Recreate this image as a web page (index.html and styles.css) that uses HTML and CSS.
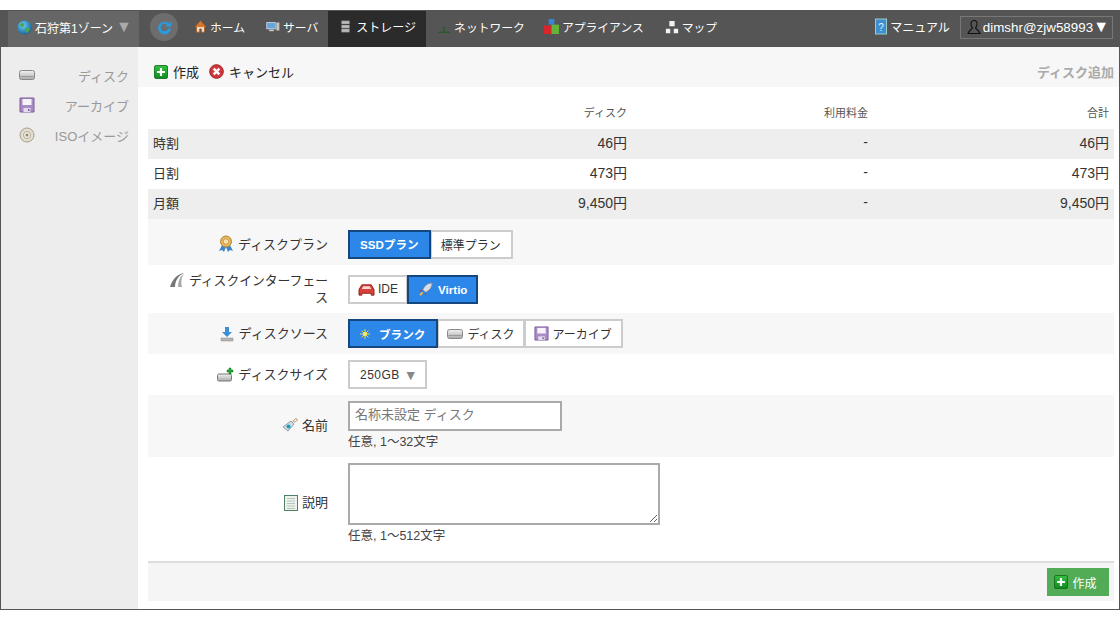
FILE: index.html
```html
<!DOCTYPE html>
<html lang="ja">
<head>
    <meta charset="UTF-8">
    <title>ディスク追加</title>
    <link rel="stylesheet" href="styles.css">
</head>
<body>
    <svg class="defs" width="0" height="0">
        <defs>
            <linearGradient id="hdd" x1="0" y1="0" x2="0" y2="1"><stop offset="0" stop-color="#f2f2f2"/><stop offset="1" stop-color="#aaa"/></linearGradient>
            <linearGradient id="plus" x1="0" y1="0" x2="0" y2="1"><stop offset="0" stop-color="#35c043"/><stop offset="1" stop-color="#0f8a1e"/></linearGradient>
            <radialGradient id="globe" cx="0.4" cy="0.35" r="0.7"><stop offset="0" stop-color="#6fd0f5"/><stop offset="1" stop-color="#0d5f9c"/></radialGradient>
            <symbol id="i-disk" viewBox="0 0 16 16">
                <rect x="0.500" y="3.500" width="15" height="9" rx="2" fill="url(#hdd)" stroke="#888"/>
                <path d="M1.500 9.500h13" stroke="#999"/>
            </symbol>
            <symbol id="i-archive" viewBox="0 0 16 16">
                <path d="M1 1h14v14H1z" fill="#a98cc6" stroke="#7a5c9a"/>
                <path d="M3.500 2h9v6h-9z" fill="#f6f3f9"/>
                <path d="M4.500 11h7v4h-7z" fill="#e4dcec"/>
                <path d="M9 12h1.500v2H9z" fill="#7a5c9a"/>
            </symbol>
            <symbol id="i-iso" viewBox="0 0 16 16">
                <circle cx="8" cy="8" r="7" fill="#e2ddd0" stroke="#a89f8a"/>
                <circle cx="8" cy="8" r="3.500" fill="#f6f2e8" stroke="#b0a890"/>
                <circle cx="8" cy="8" r="1.500" fill="#8d8672"/>
            </symbol>
            <symbol id="i-plus" viewBox="0 0 16 16">
                <rect x="0.500" y="0.500" width="15" height="15" rx="2" fill="url(#plus)" stroke="#0b6a16"/>
                <path d="M8 3.500v9M3.500 8h9" stroke="#fff" stroke-width="2.500"/>
            </symbol>
            <symbol id="i-cross" viewBox="0 0 16 16">
                <circle cx="8" cy="8" r="7.300" fill="#d1363a" stroke="#9a1f22"/>
                <path d="M5 5l6 6M11 5l-6 6" stroke="#fff" stroke-width="2.800"/>
            </symbol>
        </defs>
    </svg>

    <div class="app">
        <header class="topbar">
            <div class="zone">
                <svg class="icon" width="15" height="15" viewBox="0 0 16 16"><circle cx="8" cy="8" r="7.500" fill="url(#globe)"/><path d="M3 5l3-2 2 2-2 3-2-1zM9 9l4-1 1 2-3 4-2-2z" fill="#4fa34a"/></svg>
                <span>石狩第1ゾーン</span>
                <span class="arrow">▼</span>
            </div>
            <div class="refresh">
                <svg width="17" height="17" viewBox="0 0 16 16"><path d="M12.500 4.500A6 6 0 1 0 14 9h-2.600a3.500 3.500 0 1 1-1-3.600L8.500 7H14.500V1.500z" fill="#2a9be0"/></svg>
            </div>
            <nav class="nav">
                <a class="nav-item" href="#">
                    <svg width="13" height="13" viewBox="0 0 16 16"><path d="M3 8v7h4v-4h2v4h4V8z" fill="#f0dcc0" stroke="#a4561e"/><path d="M8 1L1 8.500h14z" fill="#d9742a"/></svg>
                    ホーム
                </a>
                <a class="nav-item" href="#">
                    <svg width="14" height="13" viewBox="0 0 18 16"><rect x="1" y="3" width="11" height="8" fill="#5fa7dc" stroke="#dde"/><path d="M4 13h6" stroke="#ccc" stroke-width="2"/><rect x="13" y="3" width="4" height="10" fill="#ccc" stroke="#888"/></svg>
                    サーバ
                </a>
                <a class="nav-item active" href="#">
                    <svg width="11" height="13" viewBox="0 0 12 16"><path d="M1 1h10v4H1zM1 6h10v4H1zM1 11h10v4H1z" fill="#bbb" stroke="#666" stroke-width="0.500"/></svg>
                    ストレージ
                </a>
                <a class="nav-item" href="#">
                    <svg width="14" height="14" viewBox="0 0 16 16"><path d="M8 7v7M1 14h14" stroke="#1b5c22" stroke-width="1.300"/></svg>
                    ネットワーク
                </a>
                <a class="nav-item app-link" href="#">
                    <svg width="15" height="15" viewBox="0 0 16 16"><rect x="5" y="0" width="6" height="6" fill="#3a83d6"/><rect x="0" y="7" width="8" height="9" fill="#d8262a"/><rect x="8" y="6" width="8" height="10" fill="#65b33a"/></svg>
                    アプライアンス
                </a>
                <a class="nav-item" href="#">
                    <svg width="14" height="14" viewBox="0 0 16 16"><path d="M5 1h6v6H5zM1 10h5v5H1zM10 10h5v5h-5z" fill="#f2f2f2"/></svg>
                    マップ
                </a>
            </nav>
            <a class="manual" href="#">
                <svg width="12" height="17" viewBox="0 0 12 16"><rect x="0.500" y="0.500" width="11" height="15" fill="#3f8fd0" stroke="#9cc"/><text x="6" y="12" font-size="10" text-anchor="middle" fill="#e8f4ff">?</text></svg>
                マニュアル
            </a>
            <div class="user">
                <svg width="16" height="16" viewBox="0 0 16 16"><path d="M8 1.500c2 0 3 1.500 3 3.500s-1 3.500-1.500 4c0 1 3.500 2 4.500 5.500H2C3 11 6.500 10 6.500 9 6 8.500 5 7 5 5s1-3.500 3-3.500z" fill="none" stroke="#111" stroke-width="1.100"/></svg>
                <span>dimshr@zjw58993</span>
                <span class="arrow light">▼</span>
            </div>
        </header>

        <div class="layout">
            <aside class="sidebar">
                <a class="side-item" href="#"><svg width="16" height="16"><use href="#i-disk"/></svg><span>ディスク</span></a>
                <a class="side-item" href="#"><svg width="16" height="16"><use href="#i-archive"/></svg><span>アーカイブ</span></a>
                <a class="side-item" href="#"><svg width="16" height="16"><use href="#i-iso"/></svg><span>ISOイメージ</span></a>
            </aside>

            <main class="main">
                <div class="toolbar">
                    <a class="tool" href="#"><svg width="14" height="14"><use href="#i-plus"/></svg>作成</a>
                    <a class="tool" href="#"><svg width="15" height="15"><use href="#i-cross"/></svg>キャンセル</a>
                    <div class="page-title">ディスク追加</div>
                </div>

                <div class="content">
                    <table class="price">
                        <thead>
                            <tr><th></th><th>ディスク</th><th>利用料金</th><th>合計</th></tr>
                        </thead>
                        <tbody>
                            <tr><td>時割</td><td>46円</td><td>-</td><td>46円</td></tr>
                            <tr><td>日割</td><td>473円</td><td>-</td><td>473円</td></tr>
                            <tr><td>月額</td><td>9,450円</td><td>-</td><td>9,450円</td></tr>
                        </tbody>
                    </table>

                    <div class="row row-plan shaded">
                        <label class="row-label">
                            <svg width="16" height="18" viewBox="0 0 16 18"><path d="M4 10l-3 6 3-1 2 2 2-5 2 5 2-2 3 1-3-6z" fill="#3d86c9"/><circle cx="8" cy="6.500" r="5.500" fill="#e8b860" stroke="#b5832a"/><circle cx="8" cy="6.500" r="2.800" fill="#f7e2ae" stroke="#c79a45"/></svg>
                            ディスクプラン
                        </label>
                        <div class="btn-group">
                            <a class="opt on" href="#">SSDプラン</a>
                            <a class="opt" href="#">標準プラン</a>
                        </div>
                    </div>

                    <div class="row row-iface">
                        <label class="row-label">
                            <span class="label-text"><svg width="16" height="16" viewBox="0 0 16 16"><path d="M15 1C8 2 3 8 1 15h5C6 9 9 4 15 1z" fill="#777"/><path d="M15 2C11 4 9 9 9 15h4c-1-5-1-9 2-13z" fill="#aaa"/></svg> ディスクインターフェース</span>
                        </label>
                        <div class="btn-group">
                            <a class="opt" href="#">
                                <svg width="17" height="15" viewBox="0 0 18 16"><path d="M4 3h10l3 5v6h-3v-2H4v2H1V8z" fill="#d9403a" stroke="#8f1f1c"/><path d="M5.500 4.500h7l1.500 3H4z" fill="#f4d9d2"/></svg>
                                IDE
                            </a>
                            <a class="opt on" href="#">
                                <svg width="17" height="15" viewBox="0 0 18 16"><path d="M15 1c-5 0-8 3-10 7l3 3c4-2 7-5 7-10z" fill="#d8dde6" stroke="#7a8798"/><path d="M5 8l-3 1 1 2zM8 11l-1 3 2-1z" fill="#c23a3a"/><path d="M5 11l-3 3" stroke="#f0c040" stroke-width="2"/></svg>
                                Virtio
                            </a>
                        </div>
                    </div>

                    <div class="row row-source shaded">
                        <label class="row-label">
                            <svg width="16" height="16" viewBox="0 0 16 16"><path d="M6 1h4v5h3l-5 5-5-5h3z" fill="#3a8fd6"/><path d="M2 12h12v3H2z" fill="#b5b5b5" stroke="#888" stroke-width="0.500"/></svg>
                            ディスクソース
                        </label>
                        <div class="btn-group">
                            <a class="opt on wide" href="#">
                                <svg width="12" height="12" viewBox="0 0 12 12"><path d="M6 1v10M1 6h10M2.500 2.500l7 7M9.500 2.500l-7 7" stroke="#f0d84a"/><circle cx="6" cy="6" r="2" fill="#f7e96a"/></svg>
                                ブランク
                            </a>
                            <a class="opt" href="#"><svg width="16" height="16"><use href="#i-disk"/></svg>ディスク</a>
                            <a class="opt" href="#"><svg width="15" height="15"><use href="#i-archive"/></svg>アーカイブ</a>
                        </div>
                    </div>

                    <div class="row row-size">
                        <label class="row-label">
                            <svg width="17" height="16" viewBox="0 0 17 16"><rect x="0.500" y="7" width="14" height="7" rx="1.500" fill="url(#hdd)" stroke="#777"/><path d="M12 1h2v2h2v2h-2v2h-2V5h-2V3h2z" fill="#27a637" stroke="#11701c" stroke-width="0.500"/></svg>
                            ディスクサイズ
                        </label>
                        <div class="select">250GB <span class="arrow grey">▼</span></div>
                    </div>

                    <div class="row row-name shaded">
                        <label class="row-label">
                            <svg width="16" height="16" viewBox="0 0 16 16"><path d="M9 4l3 3-6 7-5-4z" fill="#d3dbe2" stroke="#8ea0ae"/><circle cx="6.500" cy="9.500" r="2" fill="#18a0b8"/><path d="M11 5c1-3 3-4 4-3s-1 3-3 3" fill="none" stroke="#b98d5a"/></svg>
                            名前
                        </label>
                        <div class="field">
                            <input class="text-input" type="text" placeholder="名称未設定 ディスク">
                            <div class="hint">任意, 1〜32文字</div>
                        </div>
                    </div>

                    <div class="row row-desc">
                        <label class="row-label">
                            <svg width="14" height="16" viewBox="0 0 14 16"><rect x="0.500" y="0.500" width="13" height="15" fill="#eef3ea" stroke="#4f7f68"/><path d="M3 3.500h8M3 6h8M3 8.500h8M3 11h8M3 13.500h8" stroke="#b6c4c4"/></svg>
                            説明
                        </label>
                        <div class="field">
                            <textarea class="text-area"></textarea>
                            <div class="hint">任意, 1〜512文字</div>
                        </div>
                    </div>

                    <div class="footer">
                        <a class="submit" href="#"><svg width="14" height="14"><use href="#i-plus"/></svg>作成</a>
                    </div>
                </div>
            </main>
        </div>
    </div>
</body>
</html>
```

FILE: styles.css
```css
* {
    box-sizing: border-box;
}

html, body {
    margin: 0;
    padding: 0;
    height: 100%;
    overflow: hidden;
    background: #fff;
}

body {
    padding-top: 10px;
    font-family: "Liberation Sans", "Noto Sans CJK JP", sans-serif;
    font-size: 13px;
    color: #333;
}

a {
    color: inherit;
    text-decoration: none;
}

.defs {
    position: absolute;
}

.app {
    height: 600px;
    border-bottom: 1px solid #555;
    display: flex;
    flex-direction: column;
}

.topbar {
    height: 37px;
    flex: none;
    display: flex;
    align-items: center;
    background: #555;
    color: #fff;
    padding-left: 8px;
}

.zone {
    width: 131px;
    height: 36px;
    flex: none;
    display: flex;
    align-items: center;
    gap: 3px;
    padding: 0 0 3px 9px;
    background: #666;
    font-size: 12px;
    white-space: nowrap;
}

.arrow {
    font-size: 16px;
    line-height: 1;
    color: #aaa;
    margin-left: 0;
}

.arrow.light {
    color: #fff;
    margin-left: -1px;
}

.arrow.grey {
    color: #888;
    font-size: 14px;
    margin-left: 4px;
}

.refresh {
    width: 28px;
    height: 28px;
    border-radius: 50%;
    background: #6d6d6d;
    display: flex;
    align-items: center;
    justify-content: center;
    margin: 0 0 3px 11px;
    flex: none;
}

.nav {
    display: flex;
    align-items: stretch;
    align-self: stretch;
    margin-left: 5px;
}

.nav-item {
    display: flex;
    align-items: center;
    gap: 3px;
    padding: 0 10px 4px 11px;
    font-size: 11.8px;
    white-space: nowrap;
}

.nav-item.active {
    background: #2b2b2b;
    margin-top: 1px;
    padding: 0 10px 5px 12px;
    gap: 5px;
    font-size: 12px;
}

.nav-item.app-link svg {
    margin-left: -2px;
}

.manual {
    margin: 0 0 4px auto;
    display: flex;
    align-items: center;
    gap: 3px;
    font-size: 12px;
    white-space: nowrap;
}

.user {
    height: 23px;
    margin: 0 7px 3px 10px;
    padding: 0 3px 0 5px;
    border: 1px solid #777;
    display: flex;
    align-items: center;
    gap: 1px;
    font-size: 13.4px;
    white-space: nowrap;
}

.layout {
    flex: 1;
    display: flex;
    min-height: 0;
    border-left: 1px solid #555;
    border-right: 1px solid #555;
}

.sidebar {
    width: 137px;
    flex: none;
    background: #ededed;
    padding-top: 13px;
}

.side-item {
    height: 30px;
    display: flex;
    align-items: center;
    justify-content: space-between;
    padding: 0 9px 0 18px;
    color: #999;
    font-size: 13px;
    white-space: nowrap;
}

.main {
    flex: 1;
    min-width: 0;
    display: flex;
    flex-direction: column;
}

.toolbar {
    height: 40px;
    flex: none;
    display: flex;
    align-items: center;
    gap: 10px;
    padding: 9px 5px 0 16px;
    background: #f7f7f7;
}

.tool {
    display: flex;
    align-items: center;
    gap: 5px;
    color: #222;
    font-size: 13px;
}

.page-title {
    margin-left: auto;
    color: #aaa;
    font-weight: bold;
    font-size: 13px;
}

.content {
    padding: 12px 5px 0 10px;
}

.price {
    width: 100%;
    border-collapse: collapse;
    table-layout: fixed;
}

.price th, .price td {
    height: 30px;
    padding: 0 5px 4px;
    text-align: right;
    font-weight: normal;
}

.price th {
    font-size: 11px;
    color: #555;
}

.price td {
    font-size: 14px;
}

.price td:first-child {
    font-size: 13px;
}

.price th:first-child, .price td:first-child {
    width: 240px;
    text-align: left;
}

.price th:nth-child(2), .price td:nth-child(2) {
    width: 244px;
}

.price th:nth-child(3), .price td:nth-child(3) {
    width: 241px;
}

.price tbody tr:nth-child(odd) {
    background: #eee;
}

.row {
    display: flex;
    align-items: center;
    gap: 20px;
}

.shaded {
    background: #f7f7f7;
}

.row-plan { height: 46px; padding-top: 4px; }
.row-iface { height: 48px; }
.row-source { height: 41px; }
.row-size { height: 41px; }
.row-name { height: 62px; padding-bottom: 2px; }
.row-desc { height: 94px; padding-top: 6px; align-items: flex-start; }

.row-label {
    width: 180px;
    flex: none;
    display: flex;
    align-items: center;
    justify-content: flex-end;
    gap: 4px;
    font-size: 13px;
    line-height: 17px;
    color: #333;
}

.row-iface .row-label {
    padding-left: 12px;
    font-size: 12.8px;
}

.label-text {
    text-align: right;
}

.label-text svg {
    vertical-align: -3px;
}

.row-desc .row-label {
    margin-top: 31px;
}

.btn-group {
    display: flex;
}

.opt {
    height: 29px;
    display: flex;
    align-items: center;
    gap: 4px;
    padding: 0 8px;
    border: 2px solid #ccc;
    margin-left: -1px;
    background: #fff;
    font-size: 12px;
    white-space: nowrap;
}

.opt:first-child {
    margin-left: 0;
}

.opt:last-child {
    padding-right: 9px;
}

.row-plan .opt {
    padding: 0 10px 0 9px;
}

.row-iface .opt {
    gap: 3px;
}

.opt.on {
    position: relative;
    background: #2d87e8;
    border-color: #15477f;
    color: #fff;
    font-weight: bold;
    padding: 0 9px;
    font-size: 11.6px;
}

.row-plan .opt.on {
    padding: 0 10px;
}

.opt.wide {
    gap: 8px;
    padding-right: 11px;
}

.select {
    height: 29px;
    width: 79px;
    border: 2px solid #ccc;
    background: #fff;
    display: flex;
    align-items: center;
    padding-left: 10px;
    font-size: 12px;
    letter-spacing: 0.5px;
}

.field {
    display: flex;
    flex-direction: column;
}

.text-input {
    display: block;
    width: 214px;
    height: 30px;
    border: 2px solid #aaa;
    padding: 0 6px 3px 5px;
    font: 13px "Liberation Sans", "Noto Sans CJK JP", sans-serif;
    outline: none;
}

.text-input::placeholder {
    color: #777;
}

.text-area {
    display: block;
    width: 312px;
    height: 62px;
    border: 2px solid #aaa;
    margin: 0;
    outline: none;
}

.hint {
    margin-top: 3px;
    font-size: 12.5px;
    line-height: 16px;
    color: #444;
}

.footer {
    height: 40px;
    margin-top: 10px;
    border-top: 2px solid #ddd;
    background: #f5f5f5;
    display: flex;
    align-items: center;
    justify-content: flex-end;
    padding-right: 5px;
}

.submit {
    width: 62px;
    height: 28px;
    display: flex;
    align-items: center;
    justify-content: center;
    gap: 4px;
    padding-right: 5px;
    background: #52ab55;
    color: #fff;
    font-size: 12px;
}
```
